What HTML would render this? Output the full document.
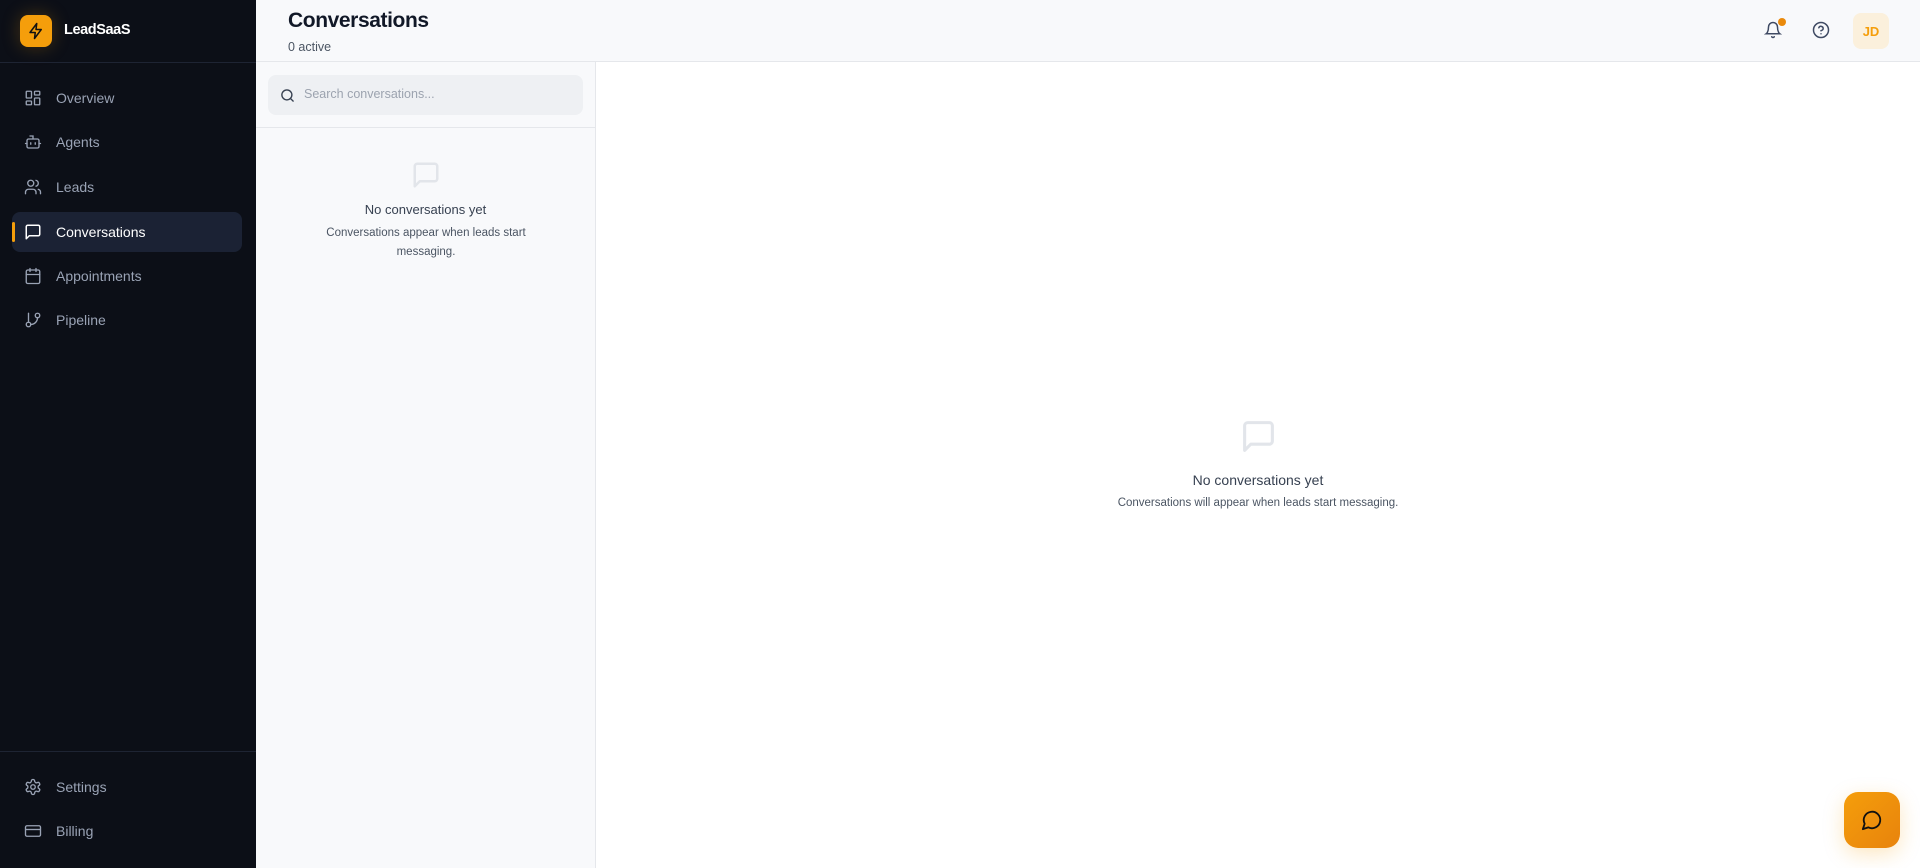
<!DOCTYPE html>
<html><head><meta charset="utf-8"><style>
*{box-sizing:border-box;margin:0;padding:0}
body{width:1920px;height:868px;overflow:hidden;font-family:"Liberation Sans",sans-serif;background:#fff;position:relative}
.sb{position:absolute;left:0;top:0;width:256px;height:868px;background:#0c0f17}
.logo{position:absolute;left:20px;top:15px;width:32px;height:32px;border-radius:8px;background:#f59e0b;box-shadow:0 0 18px rgba(245,158,11,.25);display:flex;align-items:center;justify-content:center}
.brand{position:absolute;left:64px;top:22px;color:#fff;font-weight:bold;font-size:14.5px;letter-spacing:-.4px}
.hl{position:absolute;left:0;width:256px;height:1px;background:#1e2433}
.nav{position:absolute;left:12px;width:230px;height:40px;border-radius:8px;display:flex;align-items:center;color:#9aa3b5;font-size:14px}
.nav svg{position:absolute;left:12px;top:11px}
.nav span{position:absolute;left:44px}
.nav.act{background:#1b2234;color:#fff}
.nav.act:before{content:"";position:absolute;left:0;top:10px;width:3px;height:20px;background:#f59e0b;border-radius:2px}
.hdr{position:absolute;left:256px;top:0;width:1664px;height:62px;background:#f8f9fb;border-bottom:1px solid #e5e7eb}
.title{position:absolute;left:32px;top:9px;font-size:21px;font-weight:bold;color:#111827;letter-spacing:-.4px}
.sub{position:absolute;left:32px;top:40px;font-size:12.5px;color:#4b5563}
.list{position:absolute;left:256px;top:62px;width:340px;height:806px;background:#f8f9fb;border-right:1px solid #e5e7eb}
.search{position:absolute;left:12px;top:13px;width:315px;height:40px;border-radius:8px;background:#eef0f3}
.search span{position:absolute;left:36px;top:12px;font-size:12.5px;color:#9ca3af}
.c{position:absolute;text-align:center}
</style></head><body>
<div class="sb">
<div class="logo"><svg width="18" height="18" viewBox="0 0 24 24" fill="none" stroke="#111" stroke-width="2" stroke-linejoin="round" stroke-linecap="round"><path d="M13 2 4 14h7l-1 8 9-12h-7l1-8z"/></svg></div>
<div class="brand">LeadSaaS</div>
<div class="hl" style="top:62px"></div>
<div class="nav" style="top:78px"><svg width="18" height="18" viewBox="0 0 24 24" fill="none" stroke="#9aa3b5" stroke-width="1.8"><rect x="3" y="3" width="7" height="9" rx="1"/><rect x="14" y="3" width="7" height="5" rx="1"/><rect x="14" y="12" width="7" height="9" rx="1"/><rect x="3" y="16" width="7" height="5" rx="1"/></svg><span>Overview</span></div>
<div class="nav" style="top:122px"><svg width="18" height="18" viewBox="0 0 24 24" fill="none" stroke="#9aa3b5" stroke-width="1.8" stroke-linecap="round"><path d="M12 8V4H8"/><rect x="4" y="8" width="16" height="12" rx="2"/><path d="M2 14h2M20 14h2M15 13v2M9 13v2"/></svg><span>Agents</span></div>
<div class="nav" style="top:167px"><svg width="18" height="18" viewBox="0 0 24 24" fill="none" stroke="#9aa3b5" stroke-width="1.8" stroke-linecap="round"><path d="M16 21v-2a4 4 0 0 0-4-4H6a4 4 0 0 0-4 4v2"/><circle cx="9" cy="7" r="4"/><path d="M22 21v-2a4 4 0 0 0-3-3.87M16 3.130a4 4 0 0 1 0 7.75"/></svg><span>Leads</span></div>
<div class="nav act" style="top:212px"><svg width="18" height="18" viewBox="0 0 24 24" fill="none" stroke="#fff" stroke-width="2" stroke-linejoin="round"><path d="M21 15a2 2 0 0 1-2 2H7l-4 4V5a2 2 0 0 1 2-2h14a2 2 0 0 1 2 2z"/></svg><span>Conversations</span></div>
<div class="nav" style="top:256px"><svg width="18" height="18" viewBox="0 0 24 24" fill="none" stroke="#9aa3b5" stroke-width="1.8" stroke-linecap="round"><rect x="3" y="4" width="18" height="18" rx="2"/><path d="M16 2v4M8 2v4M3 10h18"/></svg><span>Appointments</span></div>
<div class="nav" style="top:300px"><svg width="18" height="18" viewBox="0 0 24 24" fill="none" stroke="#9aa3b5" stroke-width="1.8" stroke-linecap="round"><path d="M6 3v12"/><circle cx="18" cy="6" r="3"/><circle cx="6" cy="18" r="3"/><path d="M18 9a9 9 0 0 1-9 9"/></svg><span>Pipeline</span></div>
<div class="hl" style="top:751px"></div>
<div class="nav" style="top:767px"><svg width="18" height="18" viewBox="0 0 24 24" fill="none" stroke="#9aa3b5" stroke-width="1.8"><path d="M12.2 2h-.4a2 2 0 0 0-2 2v.2a2 2 0 0 1-1 1.7l-.4.3a2 2 0 0 1-2 0l-.2-.1a2 2 0 0 0-2.7.7l-.2.4a2 2 0 0 0 .7 2.7l.2.1a2 2 0 0 1 1 1.7v.6a2 2 0 0 1-1 1.7l-.2.1a2 2 0 0 0-.7 2.7l.2.4a2 2 0 0 0 2.7.7l.2-.1a2 2 0 0 1 2 0l.4.3a2 2 0 0 1 1 1.7v.2a2 2 0 0 0 2 2h.4a2 2 0 0 0 2-2v-.2a2 2 0 0 1 1-1.7l.4-.3a2 2 0 0 1 2 0l.2.1a2 2 0 0 0 2.7-.7l.2-.4a2 2 0 0 0-.7-2.7l-.2-.1a2 2 0 0 1-1-1.7v-.6a2 2 0 0 1 1-1.7l.2-.1a2 2 0 0 0 .7-2.7l-.2-.4a2 2 0 0 0-2.7-.7l-.2.1a2 2 0 0 1-2 0l-.4-.3a2 2 0 0 1-1-1.7V4a2 2 0 0 0-2-2z"/><circle cx="12" cy="12" r="3"/></svg><span>Settings</span></div>
<div class="nav" style="top:811px"><svg width="18" height="18" viewBox="0 0 24 24" fill="none" stroke="#9aa3b5" stroke-width="1.8"><rect x="2" y="5" width="20" height="14" rx="2"/><path d="M2 10h20"/></svg><span>Billing</span></div>
</div>
<div class="hdr">
<div class="title">Conversations</div>
<div class="sub">0 active</div>
<svg style="position:absolute;left:1508px;top:21px" width="18" height="18" viewBox="0 0 24 24" fill="none" stroke="#3f4a63" stroke-width="2" stroke-linecap="round"><path d="M6 8a6 6 0 0 1 12 0c0 7 3 9 3 9H3s3-2 3-9M10.3 21a1.94 1.94 0 0 0 3.4 0"/></svg>
<div style="position:absolute;left:1522px;top:18px;width:8px;height:8px;border-radius:50%;background:#ea8a0c"></div>
<svg style="position:absolute;left:1556px;top:21px" width="18" height="18" viewBox="0 0 24 24" fill="none" stroke="#3f4a63" stroke-width="2" stroke-linecap="round"><circle cx="12" cy="12" r="10"/><path d="M9.1 9a3 3 0 0 1 5.8 1c0 2-3 3-3 3M12 17h.01"/></svg>
<div style="position:absolute;left:1597px;top:13px;width:36px;height:36px;border-radius:8px;background:#fbf0dc;color:#f59e0b;font-weight:bold;font-size:13px;display:flex;align-items:center;justify-content:center">JD</div>
</div>
<div class="list">
<div class="search"><svg style="position:absolute;left:12px;top:13px" width="15" height="15" viewBox="0 0 24 24" fill="none" stroke="#374151" stroke-width="2.2" stroke-linecap="round"><circle cx="11" cy="11" r="8"/><path d="m21 21-4.3-4.3"/></svg><span>Search conversations...</span></div>
<div style="position:absolute;left:0;top:65px;width:339px;height:1px;background:#e5e7eb"></div>
<svg style="position:absolute;left:155px;top:98px" width="30" height="30" viewBox="0 0 24 24" fill="none" stroke="#e2e5ea" stroke-width="2" stroke-linejoin="round"><path d="M21 15a2 2 0 0 1-2 2H7l-4 4V5a2 2 0 0 1 2-2h14a2 2 0 0 1 2 2z"/></svg>
<div class="c" style="left:0;width:339px;top:140px;font-size:13px;color:#374151">No conversations yet</div>
<div class="c" style="left:50px;width:240px;top:162px;font-size:11.5px;line-height:19px;color:#4b5563">Conversations appear when leads start messaging.</div>
</div>
<svg style="position:absolute;left:1240px;top:418px" width="37" height="37" viewBox="0 0 24 24" fill="none" stroke="#e2e5ea" stroke-width="2" stroke-linejoin="round"><path d="M21 15a2 2 0 0 1-2 2H7l-4 4V5a2 2 0 0 1 2-2h14a2 2 0 0 1 2 2z"/></svg>
<div class="c" style="left:596px;width:1324px;top:472px;font-size:14px;color:#374151">No conversations yet</div>
<div class="c" style="left:596px;width:1324px;top:497px;font-size:11.5px;color:#4b5563">Conversations will appear when leads start messaging.</div>
<div style="position:absolute;left:1844px;top:792px;width:56px;height:56px;border-radius:14px;background:linear-gradient(135deg,#f59e0b,#e8830c);box-shadow:0 6px 20px rgba(245,158,11,.25);display:flex;align-items:center;justify-content:center"><svg width="22" height="22" viewBox="0 0 24 24" fill="none" stroke="#111" stroke-width="2" stroke-linejoin="round"><path d="M7.9 20A9 9 0 1 0 4 16.1L2 22z"/></svg></div>
</body></html>
